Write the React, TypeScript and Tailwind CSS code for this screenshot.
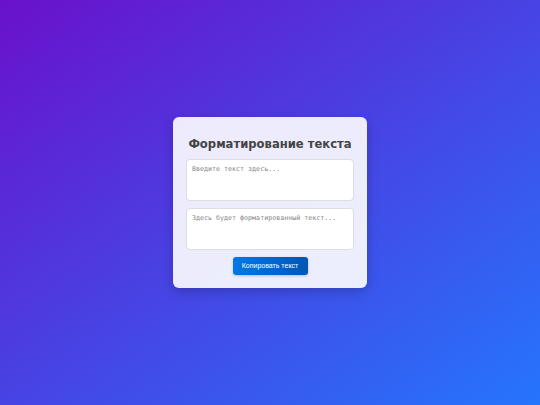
export default function App() {
  return (
    <div className="flex min-h-[405px] w-full items-center justify-center bg-linear-to-br/srgb from-[#6a11cb] to-[#2575fc]">
      <div className="flex w-[194px] flex-col rounded-[6px] bg-white/90 px-[13px] pt-[18px] pb-[13px] shadow-[0_4px_12px_rgba(0,0,0,0.2)]">
        <h2 className="mb-[6px] text-center font-['DejaVu_Sans',sans-serif] text-[11.6px] leading-[18px] font-bold whitespace-nowrap text-[#444]">
          Форматирование текста
        </h2>
        <textarea
          placeholder="Введите текст здесь..."
          className="h-[42px] w-full resize-none rounded-[4px] border border-[#ddd] bg-white px-[5px] py-[4px] font-['DejaVu_Sans_Mono',monospace] text-[6.67px] text-[#333] outline-none placeholder:text-[#888]"
        />
        <textarea
          placeholder="Здесь будет форматированный текст..."
          readOnly
          className="mt-[7px] h-[42px] w-full resize-none rounded-[4px] border border-[#ddd] bg-white px-[5px] py-[4px] font-['DejaVu_Sans_Mono',monospace] text-[6.67px] text-[#333] outline-none placeholder:text-[#888]"
        />
        <div className="mt-[7px] flex justify-center">
          <button className="h-[18px] w-[75px] rounded-[3px] bg-linear-to-r/srgb from-[#0078e7] to-[#0056b3] font-['Liberation_Sans',Arial,sans-serif] text-[7px] text-white shadow-[0_1px_3px_rgba(0,0,0,0.2)]">
            Копировать текст
          </button>
        </div>
      </div>
    </div>
  );
}
